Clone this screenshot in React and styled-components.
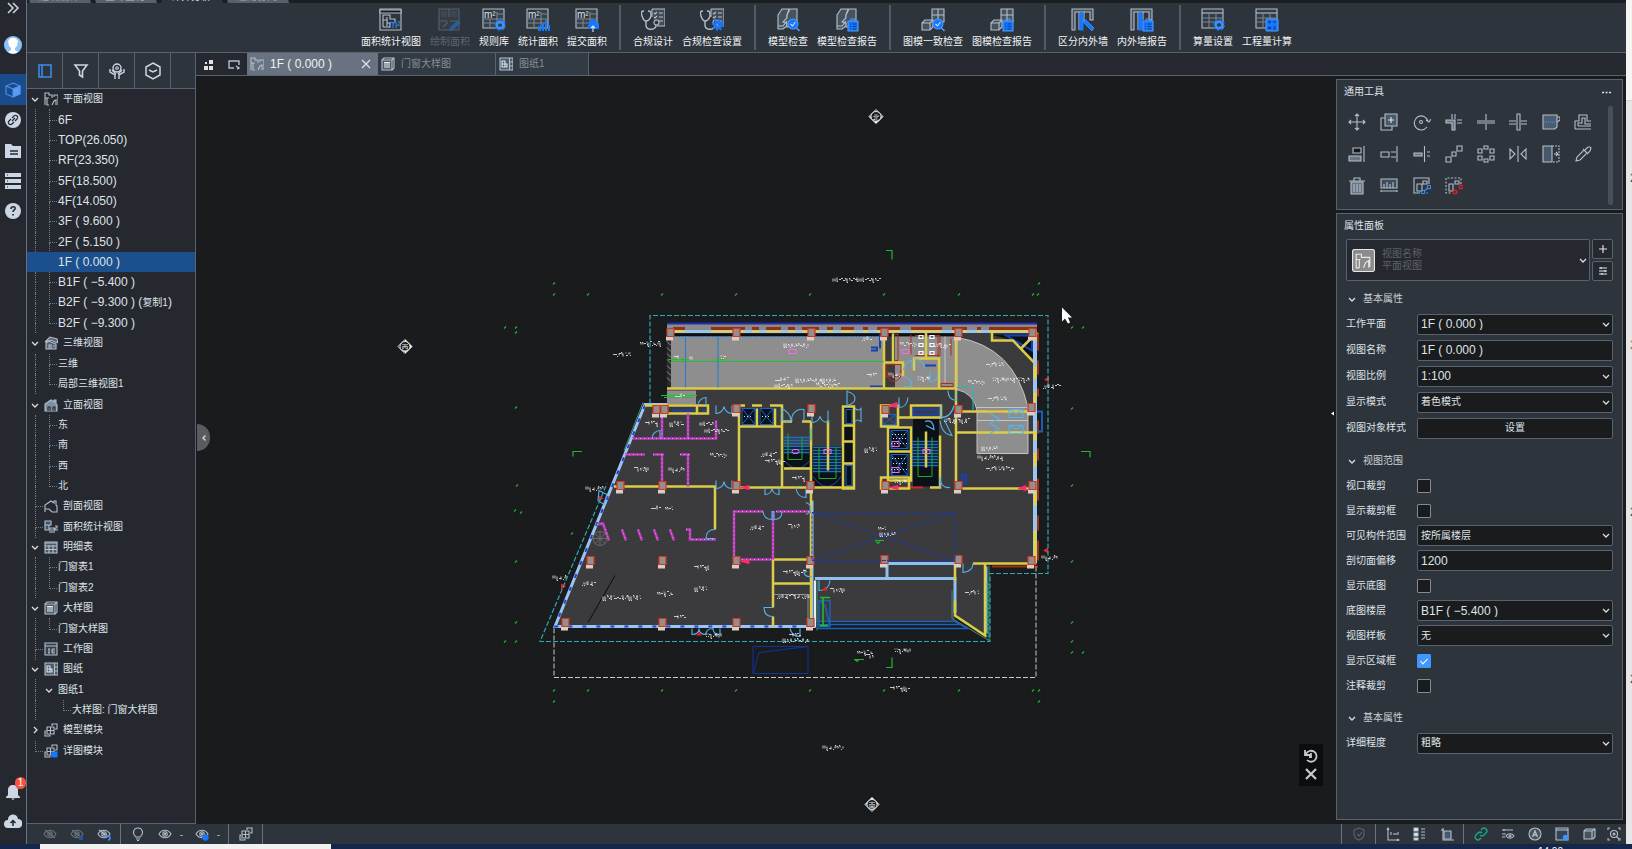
import styled, { createGlobalStyle, css } from "styled-components";

const line = "#59636f";
const bar = "#2d343c";
const side = "#25282f";
const dark = "#191b1d";
const ink = "#dfe3e8";
const stroke = "#b4bfca";
const accent = "#1677ff";

const GlobalStyle = createGlobalStyle`
  * {
    box-sizing: border-box;
  }

  body {
    margin: 0;
    background: ${dark};
    color: ${ink};
    font-family: "Liberation Sans", "Noto Sans CJK SC", sans-serif;
    font-size: 10px;
    line-height: 12px;
  }

  button, input, select {
    margin: 0;
    padding: 0;
    border: 0;
    background: none;
    color: inherit;
    font: inherit;
  }

  ul {
    margin: 0;
    padding: 0;
    list-style: none;
  }

  svg {
    display: block;
    flex: none;
  }
`;

/* ---------- icons ---------- */

const Icon = ({ size = 18, box = 18, color = stroke, children }) => (
  <svg
    width={size}
    height={size}
    viewBox={`0 0 ${box} ${box}`}
    fill="none"
    stroke={color}
    strokeWidth="1.1"
    aria-hidden="true"
  >
    {children}
  </svg>
);

const Chevron = ({ dir = "down", size = 8 }) => {
  const d = { down: "M1 3l3 3 3-3", right: "M3 1l3 3-3 3", left: "M5.5 1.5L3 4l2.5 2.5" }[dir];
  return (
    <Icon size={size} box={8} color="#d8dde2">
      <path d={d} strokeWidth="1.3" />
    </Icon>
  );
};

const badges = {
  gear: (
    <g>
      <circle cx="18" cy="17" r="3.3" stroke="#3b93ff" strokeWidth="2.4" fill="none" />
      <circle cx="18" cy="17" r="5" stroke="#1677ff" strokeWidth="1.8" strokeDasharray="2 1.9" fill="none" />
    </g>
  ),
  gearSolid: (
    <g>
      <circle cx="18" cy="17" r="2.8" stroke="#1677ff" strokeWidth="3" fill="none" />
      <circle cx="18" cy="17" r="5" stroke="#1677ff" strokeWidth="1.8" strokeDasharray="2 1.9" fill="none" />
    </g>
  ),
  bars: (
    <g fill={accent} stroke="none">
      <path d="M12 18h3v5h-3zM16 15h2v8h-2zM19 12h2v11h-2zM22 17h2v6h-2z" />
    </g>
  ),
  cloud: (
    <g>
      <path d="M14 21a3 3 0 0 1 0-5 4 4 0 0 1 8-1 3 3 0 0 1 1 6z" fill={accent} stroke="none" />
      <path d="M18 24v-6M16 20l2-2 2 2" stroke="#dce9ff" />
    </g>
  ),
  pencil: <path d="M12 22l1-3 7-6 2 2-7 6z" fill="#24619f" stroke="#24619f" />,
  chisel: <path d="M12 12l3 0 8 8-2 3-9-9z" fill={accent} stroke="#5fa5ff" strokeWidth="0.6" />,
  search: (
    <g>
      <circle cx="17" cy="16" r="5" fill={accent} stroke="#4c9bff" />
      <path d="M14.5 16l2 2 3-4" stroke="#cfe3ff" />
      <path d="M20.5 20l3 3" stroke="#4c9bff" strokeWidth="1.6" />
    </g>
  ),
  clip: (
    <g>
      <path d="M13 13h10v10H13z" fill={accent} stroke="#4c9bff" />
      <path d="M16 13v-2h4v2" stroke="#4c9bff" />
      <path d="M15 16h1M17.500 16h4M15 18.500h1M17.500 18.500h4M15 21h1M17.500 21h4" stroke="#0b3c87" />
    </g>
  ),
  calc: (
    <g>
      <rect x="11" y="11" width="12" height="12" rx="1" fill={accent} stroke="#4c9bff" />
      <path d="M13 14h3M14.500 12.500v3M18 14h3M13 19l3 2M16 19l-3 2M18 19h3M18 21h3" stroke="#0b3c87" />
    </g>
  ),
};

const bases = {
  plan: (
    <g>
      <path d="M1 1h21v21H1z" />
      <path d="M1 2h21v3H1z" fill="#15171a" />
      <path d="M4 19V7h7v4h5v3M4 12h4M8 9v9M4 19h7v-4h-3" />
      <text x="10" y="20" fontSize="10" fill="#3b93ff" stroke="none">m²</text>
    </g>
  ),
  draw: (
    <g stroke="#566069">
      <path d="M1 1h20v21H1z" fill="#353c45" />
      <path d="M3 3h6v6H3zM13 3h6v6h-6z" stroke="none" fill="#3e464f" />
      <path d="M11 1v8M1 13h8M12 13h9M5 19l5-5" />
    </g>
  ),
  area: (
    <g>
      <path d="M1 1h21v19H1z" fill="#39414a" />
      <path d="M1 11h21M1 15h21M8 11v9M15 4v16M15 6h7" stroke="#7b8690" />
      <path d="M2 2h12v8H2z" fill="#2d343c" stroke="none" />
      <text x="2" y="10" fontSize="10" fill="#dfe3e8" stroke="none">m²</text>
    </g>
  ),
  steth: (
    <g>
      <path d="M11 1h13v17H14M11 1v8" fill="#424c56" />
      <path d="M13 5l1 1 2-2M13 9l1 1 2-2M18 5h4M18 9h4M18 13h4" />
      <path d="M3 3C0 3 0 4 1 8c1 3 2 5 4 5s4-2 5-5c0-4 0-5-3-5M5 13v4c0 5 8 6 10 1" strokeWidth="1.4" />
      <circle cx="15.500" cy="14.500" r="2.500" fill="#2d343c" />
    </g>
  ),
  blocks: (
    <g fill="#46525d">
      <path d="M2 7l4-6h7l-2 6v11l-4 3H2z" />
      <path d="M11 7l3-6h7v14l-5 4h-5v-4l-4-1 4-4z" />
      <path d="M2 18h5l4-5" fill="none" />
    </g>
  ),
  cubes: (
    <g fill="#46525d">
      <path d="M11 1h12v13H11z" />
      <path d="M11 7h12M17 1v13" />
      <path d="M1 15l3-3h8v7l-3 3H1z" />
      <path d="M1 15h8v7M9 15l3-3" fill="none" />
    </g>
  ),
  wall: (
    <g>
      <path d="M1 1h21v11h-3V4H4v18H1z" fill="#46525d" />
      <path d="M8 4v18M13 4v8" />
      <path d="M9 5h3v17H9z" fill={accent} stroke={accent} />
    </g>
  ),
  table: (
    <g>
      <path d="M1 1h21v19H1z" fill="#333b44" />
      <path d="M1 5h21" />
      <path d="M1 10h21M1 14h21M8 6v14M15 6v14" stroke="#7b8690" />
    </g>
  ),
};

const RibbonIcon = ({ base, badge }) => (
  <Icon size={24} box={24}>
    {bases[base]}
    {badges[badge]}
  </Icon>
);

const treeIcons = {
  plan: <path d="M1 13V1h4v2h3v3M1 6h4M3 6v7h2M14 13V3h-4v2M8 13l2-4 2-1 0 5" />,
  house3d: (
    <g>
      <path d="M1 6l5-5 7 2 1 4-3-1-4-2z" fill="#536575" />
      <path d="M2 7l3-2 7 3v5H2z" fill="#536575" />
      <path d="M5 13V9h2v4M9 10h2" />
    </g>
  ),
  elevation: (
    <g>
      <path d="M1 13V6l6-4 3 2V2h2v4l1 1v6z" fill="#7c90a6" />
      <path d="M4 13V9h2v4M9 13V9h2v4" stroke="#25282f" />
    </g>
  ),
  section: <path d="M1 13V6l6-4 3 2V2h2v4l1 1v6H8l-3-3-4 0" />,
  area: (
    <g>
      <path d="M1 1h6v4H1zM1 5h4v5H1z" fill="#3c5468" />
      <path d="M6 13V8h4v5M8 9v4M11 6h2v2h-2v2h3" />
    </g>
  ),
  sheet: (
    <g>
      <path d="M1 2h12v11H1z" fill="#4b5a69" />
      <path d="M1 3h12M1 6h12M1 9.500h12M5 5v8M9 5v8" />
    </g>
  ),
  detail: (
    <g>
      <path d="M1 3h10v10H1z" fill="#4b5a69" />
      <path d="M1 3l2-2h10v10l-2 2M11 3l2-2" />
      <path d="M3 5.500h6M4 6v5M8 6v5M6 6v5" stroke="#e3e9ef" />
    </g>
  ),
  work: (
    <g>
      <path d="M1 1h12v12H1z" fill="#34404c" />
      <path d="M1 4h12M4 7h2M5 7v4M4 11h2M8 7h3M8 9h3M8 11h3M8 7v4" />
    </g>
  ),
  paper: (
    <g>
      <path d="M1 1h13v12H1z" fill="#4b5a69" />
      <path d="M10.500 1v12M10.500 5h4M10.500 9h4" />
      <path d="M3 4h3v6H3zM3 7h5v3H6" stroke="#dfe8f0" />
    </g>
  ),
  module: (
    <g>
      <path d="M3 4h7v7H3zM6.500 4v7M3 7.500h7" />
      <path d="M8 3V1h5v5h-2M2 8H1v5h5v-1" />
    </g>
  ),
  moduleBlue: (
    <g>
      <path d="M3 4h7v7H3zM6.500 4v7M3 7.500h7" />
      <path d="M8 3V1h5v5h-2M2 8H1v5h5v-1" />
      <path d="M8 8h5v5H8z" fill={accent} stroke={accent} />
    </g>
  ),
};

const eye = (
  <g>
    <path d="M1 7c3-5 9-5 12 0-3 5-9 5-12 0z" />
    <circle cx="7" cy="7" r="2.200" />
    <circle cx="7" cy="7" r="0.600" />
  </g>
);

const statusIcons = {
  eyeOff: <g opacity="0.45">{eye}<path d="M2 3l10 8" /></g>,
  eyeBox: <g><g opacity="0.45">{eye}<path d="M2 3l10 8" /></g><path d="M9 9h4v4H9z" fill="#1d55a0" stroke="none" /></g>,
  eyeBack: <g>{eye}<path d="M2 3l8 6" /><path d="M8 9h3a2 2 0 0 1 0 4" stroke="#3b93ff" strokeWidth="1.500" /></g>,
  bulb: <path d="M5 10C1 7 2 1 7 1s6 6 2 9zM5 12h4M6 13.500h2" />,
  eye,
  eyeGear: <g>{eye}<circle cx="10.500" cy="10.500" r="2.600" fill={accent} stroke={accent} /></g>,
  module: treeIcons.module,
  shield: <path d="M7 1l5 2v4c0 3-2 5-5 6-3-1-5-3-5-6V3zM5 7l2 2 3-4" opacity="0.35" />,
  axis: <path d="M2 1v12h11M1 3l1-2 1 2M11 12l2 1-2 1M5 8V5M8 8V6M10 8V6M12 8V5" />,
  list: <g><path d="M1 1h4v3H1zM1 6h4v3H1zM1 11h4v2H1z" fill="#e7ebef" /><path d="M8 2h4M8 5h4M8 8h4M8 11h4" /></g>,
  crop: <g><path d="M4 4h7v8H4z" fill="#46586b" /><path d="M3 1v12h11M1 3h3" /></g>,
  link: <g stroke="#1aa385" strokeWidth="1.500"><path d="M6 8a3 3 0 0 0 4 0l2-2a2.500 2.500 0 0 0-4-4L7 3" /><path d="M8 6a3 3 0 0 0-4 0L2 8a2.500 2.500 0 0 0 4 4l1-1" /></g>,
  filterEye: <g><path d="M1 3h11M3 2v2M1 7h4M1 10h3" /><path d="M5 9c2-3 6-3 8 0-2 3-6 3-8 0z" /><circle cx="9" cy="9" r="1" /></g>,
  letter: <g><circle cx="7" cy="7" r="6" fill="#46525d" /><path d="M4.500 10L7 4l2.500 6M5.500 8h3" strokeWidth="1.300" /></g>,
  frame: <g><path d="M1 1h12v12H1z" fill="#334254" /><path d="M1 3h12" /><circle cx="10.500" cy="10.500" r="2.800" fill="#3b93ff" stroke="none" /></g>,
  cube: <g><path d="M2 4l2-2h9v8l-2 2H2z" fill="#46525d" /><path d="M2 4h8v8M10 4l3-2" /></g>,
  focus: <g><path d="M1 3V1h2M11 1h2v2M13 11v2h-2M3 13H1v-2" /><circle cx="7" cy="7" r="3.500" /><circle cx="7" cy="7" r="1" /><path d="M9.500 9.500l2.500 2.500" /></g>,
};

const tools = [
  ["移动", <path d="M9 1v16M1 9h16M7 3l2-2 2 2M7 15l2 2 2-2M3 7L1 9l2 2M15 7l2 2-2 2" />],
  ["复制", <g><path d="M1 5h11v12H1z" /><path d="M5 1h12v12H5z" fill="#465a6b" /><path d="M8 7h6M11 4v6" stroke="#e3e9ee" /></g>],
  ["旋转", <g><path d="M14 14a7 7 0 1 1 1-6M13 7l3 2 2-3" /><circle cx="8" cy="9" r="1.500" /></g>],
  ["修剪", <g><path d="M1 7h9v10H7v-7H1z" fill="#6c7a87" /><path d="M7 1v5M10 1v5M12 7h5M12 10h5" /></g>],
  ["打断", <path d="M9 1v16M0 8h8M0 10h8M10 8h8M10 10h8" />],
  ["拆分", <path d="M8 1h3v16H8zM0 8h7M0 11h7M12 8h6M12 11h6" />],
  ["剖切", <g><path d="M1 2h14v12l-2 2H1z" fill="#4b5d6e" /><path d="M15 4h3v3l-3 2" /><path d="M2 9h13" stroke="#3b93ff" strokeDasharray="1 1" /></g>],
  ["偏移", <path d="M1 16h16M1 16V8h4V2h8v6h4M4 13h13M4 13v-3h4V5h3v6h6" />],
  ["对齐", <g><path d="M5 3h8v5H5z" fill="#15171a" /><path d="M1 11h12v5H1z" fill="#687684" /><path d="M16 1v16" /></g>],
  ["延伸", <path d="M1 7h8v5H1zM11 7h5M11 12h5M17 1v16" />],
  ["断开", <g><path d="M1 8h8v3H1z" fill="#687684" /><path d="M11.500 1v16M14 7h3M14 11h3" /></g>],
  ["阵列", <path d="M1 12h5v5H1zM7 7h4v4H7zM12 1h5v5h-5z" />],
  ["环形阵列", <path d="M7 1h4v3H7zM1 4h4v4H1zM13 4h4v4h-4zM1 11h4v4H1zM13 11h4v4h-4zM7 14h4v3H7z" />],
  ["镜像", <path d="M9 1v16M1 4v10l5-5zM17 4v10l-5-5z" />],
  ["拉伸", <g><path d="M1 1h9v16H1z" fill="#46586b" /><path d="M10 1h7v16h-7" strokeDasharray="2 1" /><path d="M12 9h4M14 7l2 2-2 2" /></g>],
  ["拾取", <path d="M2 16l1-4 7-7 3 3-7 7zM9 4l5 5M11 5l3-3 2 0 1 1-1 3-2 2" />],
  ["删除", <g><path d="M3 5h12v12H3z" fill="#687684" /><path d="M1 4h16M6 4V1h6v3M6 7v8M9 7v8M12 7v8" /></g>],
  ["测量", <g><path d="M1 2h16v9H1z" fill="#3f4d5a" /><path d="M4 11V7M7 11V5M10 11V7M13 11V5M1 14h16M1 13v2M17 13v2" /></g>],
  ["成组", <g><path d="M16 7V1H1v15h6" /><path d="M4 7h5v7H4zM10 4h4v3h-4z" /><g stroke="#3b93ff"><circle cx="16" cy="10" r="1.800" /><circle cx="10" cy="15" r="1.800" /><path d="M11 14l4-3M13 16h2" /></g></g>],
  ["解组", <g><path d="M16 7V1H1v15h6" strokeDasharray="2 1.500" /><path d="M4 7h4v7H4zM10 4h4v3h-4z" /><g stroke="#d0202a" strokeWidth="1.500"><circle cx="16" cy="10" r="1.800" /><circle cx="10" cy="15" r="1.800" /></g></g>],
];

/* ---------- frame ---------- */

const Page = styled.div`
  display: flex;
  flex-direction: column;
  height: 100vh;
  overflow: hidden;
`;

const Main = styled.div`
  display: flex;
  flex: 1;
  min-height: 0;
`;

const Rail = styled.nav`
  display: flex;
  flex-direction: column;
  width: 27px;
  padding-bottom: 7px;
  background: ${side};
  border-right: 1px solid #66728a;
`;

const RailButton = styled.button`
  position: relative;
  display: flex;
  align-items: center;
  justify-content: center;
  width: 26px;
  height: ${({ $h }) => $h || 30}px;
  background: ${({ $active }) => ($active ? "#1a4b8a" : "none")};
`;

const Spacer = styled.div`
  flex: 1;
`;

const Count = styled.span`
  position: absolute;
  top: 0;
  right: 0;
  width: 11px;
  height: 12px;
  border-radius: 6px;
  background: #f5523f;
  color: #fff;
  font-size: 10px;
  line-height: 12px;
  text-align: center;
`;

const App2D = styled.div`
  display: flex;
  flex: 1;
  flex-direction: column;
  min-width: 0;
`;

const TopTabs = styled.div`
  display: flex;
  gap: 2px;
  height: 3px;
  overflow: hidden;
  align-items: flex-end;
  background: #1c1f22;
`;

const TopTab = styled.button`
  padding: 0 12px;
  line-height: 12px;
  color: ${({ $active }) => ($active ? ink : "#9aa4ae")};
  background: ${({ $active }) => ($active ? bar : "#56616c")};
  clip-path: polygon(0 0, calc(100% - 3px) 0, 100% 100%, 3px 100%);
`;

const Ribbon = styled.div`
  display: flex;
  justify-content: center;
  gap: 9px;
  height: 50px;
  padding-top: 2px;
  background: ${bar};
  border-bottom: 1px solid ${line};
`;

const RibbonButton = styled.button`
  display: flex;
  flex-direction: column;
  align-items: center;
  gap: 4px;
  padding-top: 3px;
  white-space: nowrap;
  color: ${({ disabled }) => (disabled ? "#5d666f" : "#f1f3f5")};
`;

const RibbonDivider = styled.span`
  width: 2px;
  height: 45px;
  margin: 0 3px;
  background: #525c66;
`;

const Body = styled.div`
  display: flex;
  flex: 1;
  min-height: 0;
`;

/* ---------- project tree ---------- */

const Browser = styled.aside`
  display: flex;
  flex-direction: column;
  width: 169px;
  background: ${side};
  border-right: 1px solid ${line};
  border-bottom: 1px solid ${line};
`;

const BrowserTabs = styled.div`
  display: flex;
  height: 36px;
  background: ${bar};
  border-bottom: 1px solid ${line};
`;

const BrowserTab = styled.button`
  display: flex;
  align-items: center;
  justify-content: center;
  width: 36px;
  border-right: 1px solid ${line};
`;

const Tree = styled.ul`
  display: flex;
  flex: 1;
  flex-direction: column;
  padding-bottom: 62px;
`;

const Row = styled.li`
  display: flex;
  flex: 1 1 20px;
  min-height: 0;
  align-items: center;
  padding-left: 1px;
  background: ${({ $active }) => ($active ? "#1b4f8e" : "none")};
`;

const TreeIcon = styled.span`
  margin-left: 2px;
  margin-right: 3px;
`;

const Node = styled.button`
  margin-left: 2px;
  white-space: nowrap;
  font-size: ${({ $latin }) => ($latin ? 12 : 10)}px;

  small {
    font-size: 10px;
  }
`;

const edge = "1px dotted #737c85";

const Guide = styled.span`
  align-self: stretch;
  width: 14px;
  padding-left: 7px;

  &::before, &::after {
    content: "";
    display: block;
    width: 7px;
    height: 50%;
  }

  ${({ $kind }) => ["line", "tee", "end"].includes($kind) && css`
    &::before { border-left: ${edge}; }
  `}

  ${({ $kind }) => ["line", "tee"].includes($kind) && css`
    &::after { border-left: ${edge}; }
  `}

  ${({ $kind }) => ["tee", "end"].includes($kind) && css`
    &::before { border-bottom: ${edge}; }
  `}
`;

const Toggle = styled.button`
  display: flex;
  justify-content: center;
  width: 14px;
`;

// guides (t = tee, l = line, e = end, v = open, > = closed, space = none), text, icon
const rows = [
  ["v", "平面视图", "plan"],
  ["lt", "6F"],
  ["lt", "TOP(26.050)"],
  ["lt", "RF(23.350)"],
  ["lt", "5F(18.500)"],
  ["lt", "4F(14.050)"],
  ["lt", "3F ( 9.600 )"],
  ["lt", "2F ( 5.150 )"],
  ["  ", "1F ( 0.000 )"],
  ["lt", "B1F ( −5.400 )"],
  ["lt", "B2F ( −9.300 ) (", null, "复制1"],
  ["le", "B2F ( −9.300 )"],
  ["v", "三维视图", "house3d"],
  ["lt", "三维"],
  ["le", "局部三维视图1"],
  ["v", "立面视图", "elevation"],
  ["lt", "东"],
  ["lt", "南"],
  ["lt", "西"],
  ["le", "北"],
  ["t", "剖面视图", "section"],
  ["t", "面积统计视图", "area"],
  ["v", "明细表", "sheet"],
  ["lt", "门窗表1"],
  ["le", "门窗表2"],
  ["v", "大样图", "detail"],
  ["le", "门窗大样图"],
  ["t", "工作图", "work"],
  ["v", "图纸", "paper"],
  ["lv", "图纸1"],
  ["l e", "大样图: 门窗大样图"],
  [">", "模型模块", "module"],
  ["e", "详图模块", "moduleBlue"],
];

const kinds = { t: "tee", l: "line", e: "end" };

const ProjectTree = () => (
  <Tree>
    {rows.map(([guides, text, icon, extra], i) => (
      <Row key={i} $active={text.startsWith("1F")}>
        {guides.split("").map((g, k) =>
          g === "v" || g === ">" ? (
            <Toggle key={k} aria-label={text}>
              <Chevron dir={g === "v" ? "down" : "right"} />
            </Toggle>
          ) : (
            <Guide key={k} $kind={kinds[g]} />
          )
        )}
        {icon && (
          <TreeIcon>
            <Icon size={14} box={14}>{treeIcons[icon]}</Icon>
          </TreeIcon>
        )}
        <Node $latin={/^[A-Z0-9]/.test(text)}>
          {text}
          {extra && <><small>{extra}</small>)</>}
        </Node>
      </Row>
    ))}
  </Tree>
);

/* ---------- document area ---------- */

const Workspace = styled.main`
  display: flex;
  flex: 1;
  flex-direction: column;
  min-width: 0;
`;

const DocTabs = styled.div`
  display: flex;
  height: 23px;
  padding-left: 7px;
  background: ${side};
  border-bottom: 1px solid ${line};
`;

const DocTool = styled.button`
  display: flex;
  align-items: center;
  padding-right: ${({ $gap }) => $gap}px;
`;

const DocTab = styled.div`
  display: flex;
  align-items: center;
  gap: 6px;
  width: ${({ $w }) => $w}px;
  padding: 0 6px 0 3px;
  color: ${({ $active }) => ($active ? "#f0f2f4" : "#858d95")};
  background: ${({ $active }) => ($active ? "#697280" : "#323a43")};
  border-right: 1px solid ${({ $active }) => ($active ? "#697280" : line)};
  font-size: ${({ $active }) => ($active ? 12 : 10)}px;
`;

const TabName = styled.button`
  flex: 1;
  text-align: left;
`;

const Canvas = styled.div`
  position: relative;
  display: flex;
  flex: 1;
  min-height: 0;
  justify-content: flex-end;
  padding: 3px 3px 4px;
  background: ${dark};
`;

const Drawing = styled.svg`
  position: absolute;
  inset: 0;
  width: 100%;
  height: 100%;
`;

const Collapse = styled.button`
  position: absolute;
  left: 1px;
  top: 348px;
  display: flex;
  align-items: center;
  justify-content: center;
  width: 13px;
  height: 27px;
  border-radius: 0 14px 14px 0;
  background: #595b5e;
`;

const Quick = styled.div`
  position: absolute;
  right: 303px;
  bottom: 38px;
  display: grid;
  gap: 4px;
  justify-items: center;
  width: 24px;
  padding: 5px 0;
  background: #0c0d0e;

  button {
    display: block;
  }
`;

/* floor plan, drawn in sheet coordinates */

const yellow = [
  "M667 388H956", "M645 405H708V413H697V405", "M667 413H697", "M732 413H739M739 405H745M752 405H762M770 405H782V412",
  "M739 405V487H812", "M757 408V426", "M775 408V426", "M739 426H782", "M782 412V487", "M782 421H792M802 421H811",
  "M784 468H811", "M811 421V487", "M828 420V470", "M843 406H854V488H843Z", "M843 425H854M843 441H854M843 463H854",
  "M812 487H854", "M884 330V388", "M893 333V362", "M884 362H903V376", "M926 332V357", "M914 370V358H939V388",
  "M956 330V411", "M881 405H898V426H881Z", "M898 417H911V405H941V417H911", "M888 427H911V480H888Z", "M888 451H911",
  "M881 477H909V488H881Z", "M926 431V467", "M940 435V487H930", "M956 411H1035", "M956 432H1036", "M956 411V487",
  "M958 488H1036", "M992 331V340H1013L1034 362", "M1021 348L1037 332", "M614 486H715V529", "M811 487V626",
  "M772 559H812M773 559V607M773 616V626M773 583H812", "M973 563H1036", "M955 563V580", "M955 600V615L985 635V563",
];

const magenta = [
  "M662 413V438", "M632 438H716V420", "M688 413V438", "M625 454H645M653 454H664M680 454H690", "M662 454V486M688 454V486",
  "M734 559V511H763M776 511H811M773 511V559M734 559H772", "M597 524L603 523L609 540M622 529L626 540M638 529L642 540",
  "M654 529L658 540M670 529L674 540M686 529H690V539H716",
];

const doors = [
  "M652 438a8 8 0 0 1 8-8v8", "M716 405v8a8 8 0 0 0 8-7a8 8 0 0 0 8 7v-8", "M698 405a8 8 0 0 1 8-8v8",
  "M782 408v12a11 11 0 0 0 9 0q-1-8-9-12", "M792 421a10 10 0 0 1 12-12v12", "M812 410v12a8 8 0 0 0 8-6 8 8 0 0 0 8 6v-12",
  "M847 390v16M847 391q8 2 8 7t-8 7", "M855 408q4 3 6 0v13q-4-3-6 0", "M903 370q2-9 9-10v8M903 376q9 2 9 10h-8",
  "M914 358q9 1 11 10", "M930 371v10q8 0 8-9", "M948 390q0 9 8 10v-10", "M941 405v12q10 0 13-12", "M899 397v10q8 0 9-10",
  "M940 420q2 14 12 15l-8-16", "M925 421q8-3 9 8l-8-4", "M716 480v8q7 0 8-7q1 7 8 7v-8", "M765 487v7q6 0 7-6q1 6 7 6v-7",
  "M715 529q-9 0-9 9h9", "M763 511q1 8 9 8v-8h2v8q8 0 8-8", "M773 607q-9 0-9 0q0 9 9 9", "M692 628v6q7 0 7-6 0 6 7 6 0-6 7-6 0 6 7 6v-6",
  "M790 628q2 8 10 8v-8", "M940 476q0 12 10 11M940 477v10", "M963 563v9q10-1 10-9", "M819 580v10q10 0 11-10",
  "M796 487q1 10 10 10v-10M806 502q5 2 5 6M806 514q5-2 5-6", "M1009 409h14v8h-14zM1009 425h14v8h-14z",
  "M1009 409l7 4 7-4M1009 425l7 4 7-4", "M990 413l9 5-9 5 9 5-9 5", "M804 569q-1 8 8 7", "M599 490l8 4-3 10-6-4z",
];

const columns = [
  [620, 485], [662, 485], [736, 485], [590, 560], [662, 560], [736, 560], [565, 622], [662, 622], [736, 622], [810, 622],
  [810, 560], [810, 485], [656, 409], [664, 409], [736, 408], [811, 408], [670, 332], [736, 332], [811, 332], [884, 332],
  [958, 332], [1032, 332], [885, 409], [958, 409], [1031, 407], [885, 485], [958, 485], [1032, 485], [884, 559],
  [958, 559], [1031, 560],
];

const brown = [
  [673, 685], [711, 745], [752, 759], [766, 781], [788, 795], [802, 819], [827, 833], [841, 854], [863, 868], [877, 900],
  [911, 942], [952, 967], [977, 981], [989, 1037],
];

const ticks = [
  [554, 283], [554, 294], [588, 294], [662, 294], [736, 294], [810, 294], [505, 327], [516, 327], [516, 332], [516, 407],
  [884, 294], [959, 294], [1033, 294], [1038, 294], [1039, 283], [1072, 327], [1083, 327], [1072, 408], [1072, 485],
  [517, 485], [515, 510], [521, 512], [572, 533], [516, 561], [516, 622], [505, 641], [516, 641], [554, 690], [588, 690],
  [662, 690], [736, 690], [810, 690], [554, 701], [1072, 561], [1072, 622], [1072, 641], [1072, 652], [1083, 652],
  [884, 690], [959, 690], [1033, 690], [1039, 690], [1039, 701],
];

const notes = [
  [833, 279, 48], [613, 354, 18], [640, 343, 22], [784, 345, 24], [775, 379, 14], [796, 380, 40], [775, 385, 18],
  [816, 385, 24], [645, 423, 14], [670, 423, 14], [700, 423, 14], [705, 430, 24], [710, 455, 15], [634, 469, 15],
  [669, 469, 15], [761, 454, 16], [765, 461, 20], [792, 478, 14], [651, 507, 10], [665, 508, 8], [750, 527, 14],
  [788, 526, 12], [694, 567, 15], [695, 588, 12], [657, 593, 15], [582, 583, 13], [603, 597, 38], [674, 617, 12],
  [705, 635, 18], [789, 635, 12], [783, 640, 26], [586, 488, 18], [553, 577, 14], [783, 572, 24], [777, 596, 34],
  [865, 449, 11], [968, 382, 15], [992, 379, 38], [988, 398, 20], [986, 364, 18], [982, 448, 15], [978, 457, 26],
  [986, 468, 28], [944, 420, 26], [1043, 386, 17], [830, 590, 16], [965, 592, 14], [880, 534, 16], [878, 528, 8],
  [1042, 557, 16], [857, 652, 16], [866, 656, 8], [894, 650, 18], [890, 688, 20], [823, 747, 20], [900, 344, 16],
  [935, 345, 16], [889, 374, 12], [867, 375, 10], [917, 378, 14], [862, 338, 10], [674, 357, 6], [690, 357, 4], [720, 357, 6],
  [894, 481, 14], [675, 395, 10],
];

// small lettering reduced to the strokes that survive at this scale
const strokes = ["h2", "v3", "v4h1", "h1v2", "m0 2h2", "m0 3h1m1 -3v2", "m1 0v1m0 2h1"];

const Note = ({ x, y, w }) => {
  let d = "";
  for (let i = 0; i < w; i += 2) {
    const k = (i * i * 5 + i * 3 + x * 11 + y * 7) % 13;
    d += `M${x + i} ${y - 2 + (k % 2)}${strokes[k % 7]}`;
  }
  return <path d={d} />;
};

const stripes = (x1, x2, y1, y2) => {
  let d = "";
  for (let y = y1; y <= y2; y += 3) d += `M${x1} ${y}H${x2}`;
  return d;
};

const Marker = ({ x, y, tip, label }) => (
  <g>
    <path d={`M${x} ${y - 7}l7 7-7 7-7-7z`} stroke="#e8e8e8" fill={dark} />
    <path d={tip} fill="#fff" />
    <circle cx={x} cy={y} r="5" fill={dark} stroke="#e8e8e8" />
    <text x={x} y={y + 3} fontSize="7" textAnchor="middle" fill="#e8e8e8">{label}</text>
  </g>
);

const FloorPlan = () => (
  <Drawing viewBox="196 76 1430 747" fill="none" aria-label="1F">
    <path
      d="M555 626L645 405H667V323H1037V564H987V636L955 616V621H815V626Z"
      fill="#3b3b3d"
    />
    <path d="M667 323H1037V331H667Z" fill="#8a8a8c" />
    <path d="M667 333H956V336H667Z" fill="#0e0f12" />
    <path d="M667 336H884V388H667ZM667 390H696V404H667ZM895 336H955V387H895Z" fill="#8e8e8e" />
    <path d="M957 337Q1014 346 1028 407V453H977V410Q974 393 957 389Z" fill="#8e8e8e" stroke="#c4c4c4" />
    <path d="M977 420H1028M976 407H1028M945 336V382" stroke="#c4c4c4" />
    <path d="M667 338H671V388H667Z" fill="#2a2a2c" />
    <path d="M667 341l4 4M667 347l4 4M667 353l4 4M667 359l4 4M667 365l4 4M667 371l4 4M667 377l4 4" stroke="#8e8e8e" />
    <path d="M667 323H1037" stroke="#1d2fae" strokeWidth="2" />
    <path d="M671 336H884" stroke="#2f7fd6" strokeDasharray="2 1" />
    <path d="M667 331H1037" stroke="#9cc4f0" strokeWidth="3" />
    {brown.map(([a, b]) => (
      <g key={a}>
        <path d={`M${a} 331H${b}`} stroke="#e3d44a" strokeWidth="2" />
        <path d={`M${a} 328H${b}`} stroke="#983014" strokeWidth="3" />
      </g>
    ))}

    {/* shafts, lifts and stairs */}
    <path
      d="M740 408H756V425H740ZM758 408H774V425H758ZM784 446H810V467H784ZM812 446H842V486H812ZM889 428H910V450H889ZM889 452H910V478H889ZM913 418H939V486H913ZM844 407H853V487H844ZM990 334H1033V358L1014 340Z"
      fill="#0c1018"
    />
    <path d="M742 408H755V424H742ZL755 424M742 424L755 408M760 408H773V424H760ZL773 424M760 424L773 408M846 409H852V423H846ZM846 465H852V485H846ZM891 430H908V448H891ZL908 448M891 448L908 430M891 454H908V475H891ZL908 475M891 475L908 454M883 414H896V424H883ZL896 424M883 424L896 414" stroke="#1766c9" />
    <path d="M672 410H695M704 408V412M913 409H938V414H913ZM966 474H962V483H966ZM871 347H877V350H871M880 334V348M884 366V386H870M925 365H936M1006 335H1032V350Z" stroke="#1740b4" strokeWidth="2" />
    <path d={stripes(784, 809, 437, 454) + stripes(813, 841, 447, 472) + stripes(912, 938, 441, 467)} stroke="#1d6cc0" strokeWidth="1.500" />
    <path d="M788 433V459H802V437M819 447V478H836V447M918 437V476H932V437" stroke="#1faa28" />
    <path d="M813 476q14 20 28 0M785 461q12 14 24 0" stroke="#1c4fc0" />
    <g stroke="#d7dff0" strokeDasharray="1 2">
      <path d="M892 434H907M893 438H906M891 443H908M892 458H907M893 463H906M891 469H908M744 416H753M762 416H771" />
    </g>

    <g stroke="#b02a1e">
      <path d="M895 334H898V360H895M886 364H901V376H886ZM888 370a7 7 0 1 0 12 0M938 335V357M941 383H953V386H941ZM951 338V355M911 334V354M915 335H940V355H915" />
      <path d="M956 361V381M956 436V455M987 411H1005M897 487H912M811 437V455M911 487H923" stroke="#d32a1c" strokeWidth="2" />
      <path d="M992 566H1038M1038 332V350M1038 360V374M1038 388V396M1038 420V433M1038 448V460M1038 478V500M1038 515V530M1038 540V560" stroke="#9a3214" strokeWidth="2" />
    </g>

    {/* facade */}
    <path d="M1035 333V563" stroke="#9cc4f0" strokeWidth="4" />
    <path d="M1035 333V340M1035 366V378M1035 392V402M1035 430V440M1035 452V466M1035 490V505M1035 530V562" stroke="#e3d44a" strokeWidth="3" />
    <path d="M667 404H645L555 626H815" stroke="#9cc4f0" strokeWidth="3" />
    <path d="M645 405L555 626H815" stroke="#2440d8" strokeWidth="2" strokeDasharray="4 10" />
    <path d="M887 578V563H955M815 578H955V612M986 566V632M812 500V626" stroke="#8fc0f2" strokeWidth="3" />
    <path d="M815 580V626H811" stroke="#e6edf5" strokeWidth="2" />
    <path d="M952 590V618L989 640V565M643 402L624 450M817 580V630" stroke="#3d8f76" />
    <path d="M987 583V636" stroke="#35b29b" strokeWidth="3" strokeDasharray="2 2" />
    <path d="M817 621H955L968 628H817M817 624H960M819 600H830V626H819ZL825 605 830 626" stroke="#1c62b8" strokeWidth="1.500" />
    <path d="M823 597V626M820 597H830M820 625H828" stroke="#22c02c" strokeWidth="1.500" />

    <g stroke="#dccd48" strokeWidth="2.500">
      {yellow.map((d) => <path key={d} d={d} />)}
    </g>
    <g stroke="#bd3cc0" strokeWidth="2.500">
      {magenta.map((d) => <path key={d} d={d} />)}
    </g>
    <g stroke="#e3a0e6" strokeDasharray="1 3">
      {magenta.map((d) => <path key={d} d={d} />)}
    </g>
    <g stroke="#55b4ea" strokeWidth="1.100">
      {doors.map((d) => <path key={d} d={d} />)}
      <path d="M685.500 336V387M718 336V387" stroke="#2d7cd0" />
      <path d="M957 387H973V410M811 428V440" stroke="#2ab5b5" />
      <path d="M1037 411H1042V431H1037" stroke="#1d5bb8" strokeWidth="2" />
    </g>
    <path d="M671 361H884M668 359H690M716 359H724M661 395H697M664 397H694" stroke="#1fc12b" strokeWidth="1.200" />

    {columns.map(([x, y], i) => (
      <g key={i}>
        <path d={`M${x - 4} ${y + 4}h7v4h-7z`} fill="#d8cfc4" />
        <path d={`M${x - 3} ${y - 4}h7v8h-7z`} fill="#8f8f8f" stroke="#d8341f" strokeWidth="1.200" />
      </g>
    ))}

    {/* fixtures */}
    <g stroke="#fff" strokeWidth="1.200">
      <path d="M919 335h4v3h-4zM919 343h4v3h-4zM919 351h4v3h-4zM930 335h4v3h-4zM930 343h4v3h-4zM930 351h4v3h-4z" />
    </g>
    <g stroke="#f070e0">
      <rect x="789" y="349" width="7" height="4" />
      <rect x="902" y="349" width="7" height="4" />
      <rect x="792" y="449" width="7" height="4" rx="2" />
      <rect x="824" y="449" width="7" height="4" />
      <rect x="923" y="449" width="7" height="4" />
      <rect x="892" y="441" width="7" height="5" />
      <rect x="892" y="467" width="7" height="5" />
    </g>
    <path d="M889 405l8-3v5zM741 487l8-2v4zM890 487l8-2v4zM1018 488l8-3v5zM741 561l8-2v4z" fill="#ff2a6a" stroke="#ff2a6a" />
    <path d="M566 586l-5-3v6zM604 498l-5-3v5zM699 631l3 4h-6zM1044 379l5-3v6zM1043 550l5-3v6zM825 586l3 4h-6z" fill="#f01e1e" />
    <circle cx="600" cy="538" r="7" stroke="#6a6a6c" />
    <path d="M600 531V545M593 538H607M595 533l10 10M605 533l-10 10" stroke="#6a6a6c" />
    <path d="M615 575L588 622" stroke="#0b0b0c" />
    <path d="M774 594H808V620" stroke="#8c8c8e" />

    <path d="M812 512H955V560H812ZL955 560M812 560L955 512" stroke="#1b3aa6" strokeDasharray="4 1" />
    <path d="M753 646H808V673H753ZM759 652 808 646M753 673L759 652" stroke="#10349c" />
    <path d="M650 403V315H1048V573H990V641H540L607 483" stroke="#2ea9b2" strokeDasharray="5 2" strokeWidth="1.200" />
    <path d="M554 628V677H1036V566" stroke="#c9c9c9" strokeDasharray="5 2" />

    <g stroke="#22b52e" strokeWidth="1.200">
      <path d="M573 456V451H582M886 250H892V259M1081 451H1090V457M892 657V667H886M854 659H864M855 659l2 2 2-2M875 540H884M876 541l2 2 2-2" />
      {ticks.map(([x, y], i) => <path key={i} d={`M${x - 1} ${y + 1}l2-2`} />)}
    </g>
    <g stroke="#f2f2f2" strokeWidth="0.800">
      {notes.map(([x, y, w]) => <Note key={`${x}-${y}`} x={x} y={y} w={w} />)}
    </g>

    <Marker x={876} y={116} tip="M869 116l7 7 7-7z" label="北" />
    <Marker x={405} y={346} tip="M405 339l7 7-7 7z" label="西" />
    <Marker x={872} y={804} tip="M865 804l7-7 7 7z" label="南" />
    <path d="M1334 411v4l-3-2z" fill="#fff" />
    <path d="M1062 307v14l3-3 3 5 2-1-2-5h4z" fill="#fff" />
  </Drawing>
);

/* ---------- right panels ---------- */

const Panels = styled.div`
  position: relative;
  display: flex;
  flex-direction: column;
  gap: 3px;
  width: 287px;
`;

const Panel = styled.section`
  flex: ${({ $grow }) => ($grow ? 1 : "none")};
  padding: 5px 9px 4px 9px;
  background: ${bar};
  border: 1px solid ${line};
`;

const PanelHead = styled.header`
  display: flex;
  align-items: center;
  justify-content: space-between;
  height: 14px;
  padding: 0 2px 0 0;
  margin-left: -2px;
`;

const ToolArea = styled.div`
  display: flex;
  gap: 9px;
  padding-top: 7px;
  margin-left: -5px;
`;

const ToolGrid = styled.div`
  display: grid;
  flex: 1;
  grid-template-columns: repeat(8, 1fr);
  padding-bottom: 3px;
`;

const ToolButton = styled.button`
  display: flex;
  align-items: center;
  justify-content: center;
  height: 32px;
`;

const Scrollbar = styled.div`
  width: 5px;
  border-radius: 2px;
  background: #474f58;
`;

const Picker = styled.div`
  display: grid;
  grid-template-columns: 1fr 21px;
  gap: 2px;
  margin-top: 6px;
`;

const PickerMain = styled.button`
  display: flex;
  grid-row: span 2;
  align-items: center;
  gap: 7px;
  padding: 0 2px 0 5px;
  text-align: left;
  color: #5d6167;
  background: ${side};
  border: 1px solid ${line};
  border-radius: 2px;

  span {
    flex: 1;
  }
`;

const PickerSide = styled.button`
  display: flex;
  align-items: center;
  justify-content: center;
  height: 20px;
  background: ${side};
  border: 1px solid ${line};
  border-radius: 2px;
`;

const Heading = styled.button`
  display: flex;
  align-items: center;
  gap: 7px;
  width: 100%;
  height: 24px;
  margin-top: ${({ $first }) => ($first ? 6 : 8)}px;
  padding-left: 2px;
  color: #ccd1d6;
`;

const Field = styled.div`
  display: grid;
  grid-template-columns: 71px 1fr;
  align-items: center;
  height: ${({ $tight }) => ($tight ? 25 : 26)}px;
`;

const box = css`
  width: 100%;
  height: 21px;
  padding: 0 3px;
  color: ${ink};
  background: ${dark};
  border: 1px solid ${line};
  border-radius: 2px;
  font-size: ${({ $latin }) => ($latin ? 12 : 10)}px;
`;

const TextInput = styled.input`
  ${box}
`;

const ActionButton = styled.button`
  ${box}
`;

const Select = styled.select`
  ${box}
  appearance: none;
`;

const SelectWrap = styled.div`
  position: relative;

  svg {
    position: absolute;
    right: 3px;
    top: 6px;
    pointer-events: none;
  }
`;

const Check = styled.input`
  appearance: none;
  width: 14px;
  height: 14px;
  background: ${dark};
  border: 1px solid #848b92;
  border-radius: 1px;

  &:checked {
    background: #4096ff;
    border-color: #4096ff;
  }

  &:checked::after {
    content: "";
    display: block;
    width: 3px;
    height: 6px;
    margin: 2px 0 0 4px;
    border: solid #fff;
    border-width: 0 1px 1px 0;
    transform: rotate(45deg);
  }
`;

const sections = [
  {
    title: "基本属性",
    fields: [
      ["工作平面", "select", "1F ( 0.000 )"],
      ["视图名称", "text", "1F ( 0.000 )"],
      ["视图比例", "select", "1:100"],
      ["显示模式", "select", "着色模式"],
      ["视图对象样式", "button", "设置"],
    ],
  },
  {
    title: "视图范围",
    tight: true,
    fields: [
      ["视口裁剪", "check", false],
      ["显示裁剪框", "check", false],
      ["可见构件范围", "select", "按所属楼层"],
      ["剖切面偏移", "text", "1200"],
      ["显示底图", "check", false],
      ["底图楼层", "select", "B1F ( −5.400 )"],
      ["视图样板", "select", "无"],
      ["显示区域框", "check", true],
      ["注释裁剪", "check", false],
    ],
  },
  { title: "基本属性", fields: [["详细程度", "select", "粗略"]] },
];

const Control = ({ id, type, value }) => {
  const latin = /^[A-Z0-9]/.test(value);
  if (type === "check") return <Check id={id} type="checkbox" defaultChecked={value} />;
  if (type === "text") return <TextInput id={id} type="text" defaultValue={value} $latin={latin} />;
  if (type === "button") return <ActionButton id={id} type="button">{value}</ActionButton>;
  return (
    <SelectWrap>
      <Select id={id} $latin={latin}>
        <option>{value}</option>
      </Select>
      <Chevron />
    </SelectWrap>
  );
};

const Properties = () => (
  <Panel $grow>
    <PanelHead>属性面板</PanelHead>
    <Picker>
      <PickerMain>
        <Icon size={23} box={22} color="#e6e6e6">
          <rect x="0.500" y="0.500" width="21" height="21" rx="2" fill="#8b8b8b" />
          <path d="M4 18V5h5v3h8v9M4 10h4M7 10v8M11 18l2-5 3-2v7M4 5v13h3" />
        </Icon>
        <span>视图名称<br />平面视图</span>
        <Chevron />
      </PickerMain>
      <PickerSide aria-label="新建">
        <Icon size={10} box={10} color="#e6e9ec"><path d="M5 1v8M1 5h8" /></Icon>
      </PickerSide>
      <PickerSide aria-label="编辑">
        <Icon size={10} box={10} color="#e6e9ec"><path d="M1 2h8M1 5h8M1 8h8M3 1v2M7 4v2M4 7v2" /></Icon>
      </PickerSide>
    </Picker>
    {sections.map(({ title, tight, fields }, s) => (
      <div key={s}>
        <Heading $first={s === 0}>
          <Chevron />
          {title}
        </Heading>
        {fields.map(([label, type, value]) => (
          <Field key={label} $tight={tight}>
            <label htmlFor={label}>{label}</label>
            <Control id={label} type={type} value={value} />
          </Field>
        ))}
      </div>
    ))}
  </Panel>
);

/* ---------- status bar ---------- */

const StatusBar = styled.footer`
  display: flex;
  align-items: center;
  height: 20px;
  padding-left: 9px;
  background: ${bar};
`;

const StatusButton = styled.button`
  display: flex;
  align-items: center;
  justify-content: center;
  width: 27px;
  height: 20px;

  &:last-child {
    width: 24px;
  }
`;

const Caret = styled.span`
  width: 3px;
  height: 1px;
  margin: 2px 5px 0 2px;
  background: #98a1aa;
`;

const StatusDivider = styled.span`
  width: 1px;
  height: 20px;
  margin: 0 3px;
  background: #6a737c;
`;

const leftStatus = ["eyeOff", "eyeBox", "eyeBack", "|", "bulb", "eye", "^", "eyeGear", "^", "|", "module", "|"];
const rightStatus = ["|", "shield", "|", "axis", "list", "crop", "|", "link", "filterEye", "letter", "frame", "cube", "focus"];

const StatusGroup = ({ items }) =>
  items.map((name, i) => {
    if (name === "|") return <StatusDivider key={i} />;
    if (name === "^") return <Caret key={i} />;
    return (
      <StatusButton key={i} aria-label={name}>
        <Icon size={14} box={14}>{statusIcons[name]}</Icon>
      </StatusButton>
    );
  });

const Neighbour = styled.div`
  width: 6px;
  overflow: hidden;
  background: linear-gradient(#f6f5f4 100px, #d6d6d6 100px, #d6d6d6 101px, #e6e6e6 101px);
  padding-top: 95px;

  span {
    display: block;
    height: 167px;
    padding-left: 4px;
    color: #4a4a4a;
    font-size: 12px;
    line-height: 167px;
  }

  span:nth-child(2) {
    color: #e0583a;
  }
`;

const Taskbar = styled.div`
  display: flex;
  justify-content: space-between;
  height: 5px;
  padding: 0 69px 0 40px;
  overflow: hidden;
  background: #14264a;
`;

const TaskWindow = styled.div`
  width: 291px;
  background: #f1f1f1;
`;

const Clock = styled.span`
  padding-top: 2px;
  color: #fff;
`;

const ribbon = [
  ["面积统计视图", "plan"],
  ["绘制面积", "draw", "pencil"],
  ["规则库", "area", "gear"],
  ["统计面积", "area", "bars"],
  ["提交面积", "area", "cloud"],
  null,
  ["合规设计", "steth"],
  ["合规检查设置", "steth", "gearSolid"],
  null,
  ["模型检查", "blocks", "search"],
  ["模型检查报告", "blocks", "clip"],
  null,
  ["图模一致检查", "cubes", "search"],
  ["图模检查报告", "cubes", "clip"],
  null,
  ["区分内外墙", "wall", "chisel"],
  ["内外墙报告", "wall", "clip"],
  null,
  ["算量设置", "table", "gear"],
  ["工程量计算", "table", "calc"],
];

const light = "#cdd6e4";

const SideRail = () => (
  <Rail>
    <RailButton $h={16} aria-label="展开">
      <Icon size={14} box={14} color={light}><path d="M2 2l5 5-5 5M7 2l5 5-5 5" strokeWidth="1.500" /></Icon>
    </RailButton>
    <RailButton $h={58} aria-label="用户">
      <Icon box={18} color="none">
        <circle cx="9" cy="9" r="9" fill="#8fc3f7" />
        <path d="M5 4c1-3 7-3 8 0l1 1-1 5-2 2v2l3 2c-3 2-7 2-10 0l3-2v-2l-2-2-1-5z" fill="#fff" />
      </Icon>
    </RailButton>
    <RailButton $h={31} $active aria-label="模型">
      <Icon size={16} box={16} color="#4c93ea">
        <path d="M8 1l7 3v8l-7 3-7-3V4zM1 4l7 3 7-3" />
        <path d="M8 7l7-3v8l-7 3z" fill="#5b9df0" />
      </Icon>
    </RailButton>
    <RailButton aria-label="链接">
      <Icon size={16} box={16} color={side}>
        <circle cx="8" cy="8" r="8" fill={light} stroke="none" />
        <path d="M7 9l3-3M7 6l2-2a2 2 0 0 1 3 3l-2 2M9 10l-2 2a2 2 0 0 1-3-3l2-2" />
      </Icon>
    </RailButton>
    <RailButton $h={31} aria-label="文件">
      <Icon size={16} box={16} color={side}>
        <path d="M0 1h6l2 2h8v12H0z" fill={light} stroke="none" />
        <path d="M5 8h8M5 11h8" strokeWidth="1.500" />
      </Icon>
    </RailButton>
    <RailButton aria-label="列表">
      <Icon size={16} box={16} color={side}>
        <path d="M0 0h16v4H0zM0 6h16v4H0zM0 12h16v4H0z" fill={light} stroke="none" />
        <path d="M2 2h1M2 8h1M2 14h1" />
      </Icon>
    </RailButton>
    <RailButton aria-label="帮助">
      <Icon size={16} box={16} color={side}>
        <circle cx="8" cy="8" r="8" fill={light} stroke="none" />
        <path d="M6 6c0-3 5-3 4 0 0 1-2 1-2 3M8 11v1.500" strokeWidth="1.600" />
      </Icon>
    </RailButton>
    <Spacer />
    <RailButton aria-label="通知">
      <Icon size={16} box={16} color="none">
        <path d="M8 1c3 0 5 2 5 5v5l2 2v1H1v-1l2-2V6c0-3 2-5 5-5zM6 14.500h4l-2 1.500z" fill={light} />
      </Icon>
      <Count>1</Count>
    </RailButton>
    <RailButton aria-label="上传">
      <Icon size={18} box={18} color={side}>
        <path d="M4 15a4 4 0 0 1 0-8 5 5 0 0 1 10-1 4.500 4.500 0 0 1 0 9z" fill={light} stroke="none" />
        <path d="M9 13V8M6.500 10L9 7.500l2.500 2.500" strokeWidth="1.500" />
      </Icon>
    </RailButton>
  </Rail>
);

const App = () => (
  <Page>
    <GlobalStyle />
    <Main>
      <SideRail />
      <App2D>
        <TopTabs>
          <TopTab>建筑设计</TopTab>
          <TopTab>全专业化</TopTab>
          <TopTab $active>计算分析</TopTab>
          <TopTab>通用协同</TopTab>
        </TopTabs>
        <Ribbon>
          {ribbon.map((item, i) =>
            item ? (
              <RibbonButton key={item[0]} disabled={item[1] === "draw"}>
                <RibbonIcon base={item[1]} badge={item[2]} />
                {item[0]}
              </RibbonButton>
            ) : (
              <RibbonDivider key={i} />
            )
          )}
        </Ribbon>
        <Body>
          <Browser>
            <BrowserTabs>
              <BrowserTab aria-label="视图">
                <Icon size={14} box={14} color="#3f8df0"><path d="M1 1h12v12H1zM4 1v12" strokeWidth="1.500" /></Icon>
              </BrowserTab>
              <BrowserTab aria-label="筛选">
                <Icon size={16} box={16} color={light}><path d="M2 2h12L9.500 8v6l-3-2V8z" strokeWidth="1.600" /></Icon>
              </BrowserTab>
              <BrowserTab aria-label="构件">
                <Icon size={16} box={16} color={light}>
                  <circle cx="8" cy="5" r="4" strokeWidth="1.400" />
                  <circle cx="8" cy="5" r="1.300" />
                  <path d="M1 6v3l5 3v4M15 6v3l-5 3v4M3 7l4 4M13 7l-4 4" strokeWidth="1.400" />
                </Icon>
              </BrowserTab>
              <BrowserTab aria-label="族库">
                <Icon size={18} box={18} color={light}><path d="M9 1l7 4v8l-7 4-7-4V5zM5 8l4 2 4-2" strokeWidth="1.500" /></Icon>
              </BrowserTab>
            </BrowserTabs>
            <ProjectTree />
          </Browser>
          <Workspace>
            <DocTabs>
              <DocTool $gap={14} aria-label="平铺">
                <Icon size={11} box={11} color="none">
                  <path d="M6 1h4v4H6zM1 7h4v4H1zM6 7h4v4H6zM2 3h2v2H2z" fill="#dfe3e8" />
                </Icon>
              </DocTool>
              <DocTool $gap={7} aria-label="窗口">
                <Icon size={12} box={12}><path d="M6 10H1V3h10v4M8 8l3 2-2 1" strokeWidth="1.400" /></Icon>
              </DocTool>
              <DocTab $active $w={131}>
                <Icon size={14} box={14}>{treeIcons.plan}</Icon>
                <TabName>1F ( 0.000 )</TabName>
                <button aria-label="关闭">
                  <Icon size={10} box={10} color="#e4e7ea"><path d="M1 1l8 8M9 1l-8 8" /></Icon>
                </button>
              </DocTab>
              <DocTab $w={118}>
                <Icon size={14} box={14}>{treeIcons.detail}</Icon>
                <TabName>门窗大样图</TabName>
              </DocTab>
              <DocTab $w={93}>
                <Icon size={14} box={14}>{treeIcons.paper}</Icon>
                <TabName>图纸1</TabName>
              </DocTab>
            </DocTabs>
            <Canvas>
              <FloorPlan />
              <Collapse aria-label="收起">
                <Chevron dir="left" />
              </Collapse>
              <Quick>
                <button aria-label="重置">
                  <Icon size={14} box={14} color="#c9c9c9">
                    <path d="M1 1v5h5M2 5a5.500 5.500 0 1 1 1 6M7 4v4H5" strokeWidth="1.800" />
                  </Icon>
                </button>
                <button aria-label="关闭工具">
                  <Icon size={14} box={14} color="#c9c9c9"><path d="M2 2l10 10M12 2L2 12" strokeWidth="2.200" /></Icon>
                </button>
              </Quick>
              <Panels>
                <Panel>
                  <PanelHead>
                    通用工具
                    <button aria-label="更多">
                      <Icon size={9} box={9} color="#dfe3e8"><path d="M0 4.500h2M3.500 4.500h2M7 4.500h2" strokeWidth="1.600" /></Icon>
                    </button>
                  </PanelHead>
                  <ToolArea>
                    <ToolGrid>
                      {tools.map(([name, art]) => (
                        <ToolButton key={name} aria-label={name}>
                          <Icon>{art}</Icon>
                        </ToolButton>
                      ))}
                    </ToolGrid>
                    <Scrollbar />
                  </ToolArea>
                </Panel>
                <Properties />
              </Panels>
            </Canvas>
          </Workspace>
        </Body>
        <StatusBar>
          <StatusGroup items={leftStatus} />
          <Spacer />
          <StatusGroup items={rightStatus} />
        </StatusBar>
      </App2D>
      <Neighbour>
        <span>2</span>
        <span>2</span>
        <span>2</span>
        <span>2</span>
      </Neighbour>
    </Main>
    <Taskbar>
      <TaskWindow />
      <Clock>14:00</Clock>
    </Taskbar>
  </Page>
);

export default App;
